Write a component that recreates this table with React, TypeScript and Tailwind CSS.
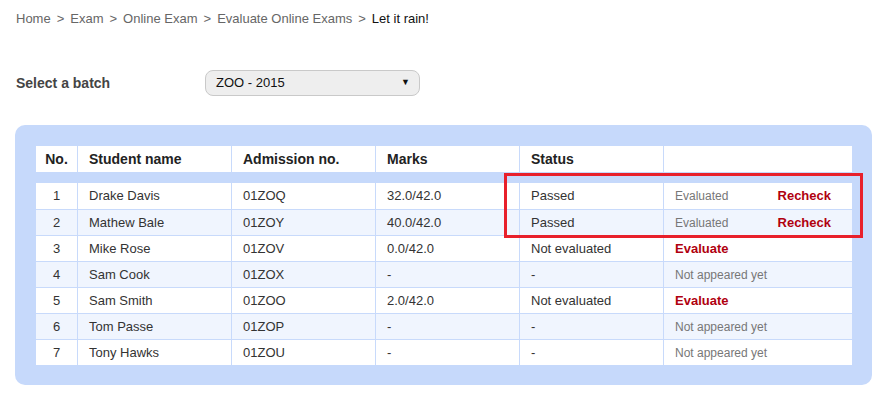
import React from "react";

type Row = {
  no: number;
  name: string;
  adm: string;
  marks: string;
  status: string;
  action: "recheck" | "evaluate" | "none";
};

const rows: Row[] = [
  { no: 1, name: "Drake Davis", adm: "01ZOQ", marks: "32.0/42.0", status: "Passed", action: "recheck" },
  { no: 2, name: "Mathew Bale", adm: "01ZOY", marks: "40.0/42.0", status: "Passed", action: "recheck" },
  { no: 3, name: "Mike Rose", adm: "01ZOV", marks: "0.0/42.0", status: "Not evaluated", action: "evaluate" },
  { no: 4, name: "Sam Cook", adm: "01ZOX", marks: "-", status: "-", action: "none" },
  { no: 5, name: "Sam Smith", adm: "01ZOO", marks: "2.0/42.0", status: "Not evaluated", action: "evaluate" },
  { no: 6, name: "Tom Passe", adm: "01ZOP", marks: "-", status: "-", action: "none" },
  { no: 7, name: "Tony Hawks", adm: "01ZOU", marks: "-", status: "-", action: "none" },
];

const cols = "grid grid-cols-[41px_154px_144px_144px_144px_189px]";
const cell = "flex items-center border-l border-[#c8dafb] px-[11px]";

function ActionCell({ action }: { action: Row["action"] }) {
  if (action === "recheck") {
    return (
      <div className={`${cell} justify-between pr-[21px]`}>
        <span className="text-[12px] text-[#777]">Evaluated</span>
        <span className="text-[13px] font-bold text-[#b0000f]">Recheck</span>
      </div>
    );
  }
  if (action === "evaluate") {
    return (
      <div className={cell}>
        <span className="text-[13px] font-bold text-[#b0000f]">Evaluate</span>
      </div>
    );
  }
  return (
    <div className={cell}>
      <span className="text-[12px] text-[#777]">Not appeared yet</span>
    </div>
  );
}

function App() {
  const sep = <span className="mx-[6px]">&gt;</span>;
  return (
    <div className="relative min-h-screen w-full bg-white font-['Liberation_Sans',Arial,sans-serif] text-[#333]">
      {/* breadcrumb */}
      <nav className="px-[16px] pt-[9px] text-[13px] leading-[20px] text-[#666]">
        <span>Home</span>
        {sep}
        <span>Exam</span>
        {sep}
        <span>Online Exam</span>
        {sep}
        <span>Evaluate Online Exams</span>
        {sep}
        <span className="text-[#111]">Let it rain!</span>
      </nav>

      {/* batch select */}
      <div className="mt-[41px] flex items-center px-[16px]">
        <label className="w-[189px] text-[14px] font-bold text-[#444]">Select a batch</label>
        <div className="flex h-[26px] w-[215px] items-center justify-between rounded-[8px] border border-[#c9c9c9] bg-[#eeeeee] pl-[10px] pr-[9px] text-[13px] text-[#111]">
          <span>ZOO - 2015</span>
          <span className="text-[9px]">▼</span>
        </div>
      </div>

      {/* results panel */}
      <div className="mx-[15px] mt-[29px] w-[857px] rounded-[10px] bg-[#c6d9fb] pb-[20px] pl-[21px] pr-[20px] pt-[21px]">
        <div className={`${cols} h-[26px] bg-white text-[14px] font-bold text-[#222]`}>
          <div className="flex items-center justify-center">No.</div>
          <div className={cell}>Student name</div>
          <div className={cell}>Admission no.</div>
          <div className={cell}>Marks</div>
          <div className={cell}>Status</div>
          <div className={cell}></div>
        </div>

        <div className="mt-[11px]">
          {rows.map((r, i) => (
            <div
              key={r.no}
              className={`${cols} h-[26px] text-[13px] ${i > 0 ? "border-t border-[#c8dafb]" : ""} ${
                i % 2 === 1 ? "bg-[#f0f5fe]" : "bg-white"
              }`}
            >
              <div className="flex items-center justify-center">{r.no}</div>
              <div className={cell}>{r.name}</div>
              <div className={cell}>{r.adm}</div>
              <div className={cell}>{r.marks}</div>
              <div className={cell}>{r.status}</div>
              <ActionCell action={r.action} />
            </div>
          ))}
        </div>
      </div>

      {/* highlight annotation */}
      <div className="pointer-events-none absolute left-[504px] top-[173px] h-[65px] w-[359px] border-[3px] border-[#e8202b]" />
    </div>
  );
}

export default App;
